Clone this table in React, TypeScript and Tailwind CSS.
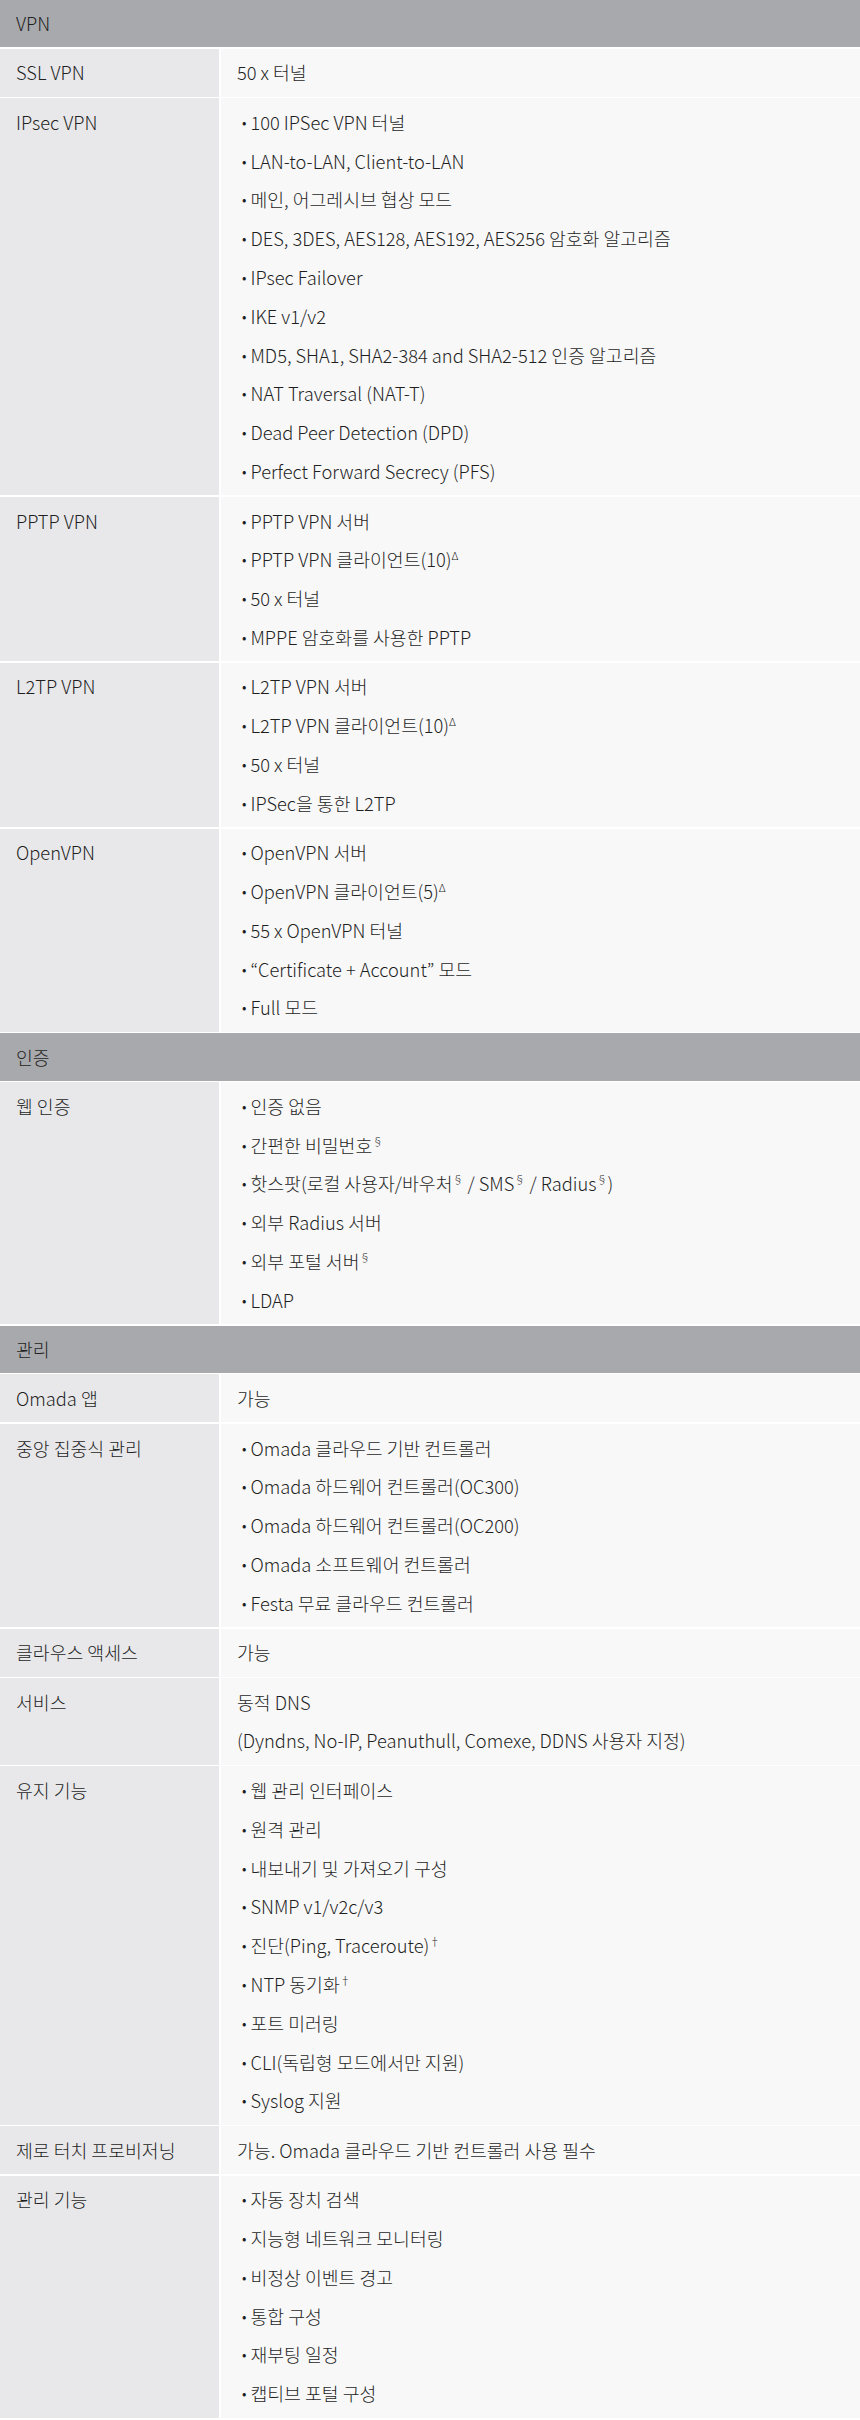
import React from "react";

type Row = {
  label: string;
  value?: React.ReactNode[];
  list?: React.ReactNode[];
};

type Section = {
  title: string;
  rows: Row[];
};

const Sup = ({ children }: { children: React.ReactNode }) => (
  <sup className="relative -top-[7px] text-[11px] leading-none">{children}</sup>
);

const sections: Section[] = [
  {
    title: "VPN",
    rows: [
      { label: "SSL VPN", value: ["50 x 터널"] },
      {
        label: "IPsec VPN",
        list: [
          "100 IPSec VPN 터널",
          "LAN-to-LAN, Client-to-LAN",
          "메인, 어그레시브 협상 모드",
          "DES, 3DES, AES128, AES192, AES256 암호화 알고리즘",
          "IPsec Failover",
          "IKE v1/v2",
          "MD5, SHA1, SHA2-384 and SHA2-512 인증 알고리즘",
          "NAT Traversal (NAT-T)",
          "Dead Peer Detection (DPD)",
          "Perfect Forward Secrecy (PFS)",
        ],
      },
      {
        label: "PPTP VPN",
        list: [
          "PPTP VPN 서버",
          <>PPTP VPN 클라이언트(10)<Sup>Δ</Sup></>,
          "50 x 터널",
          "MPPE 암호화를 사용한 PPTP",
        ],
      },
      {
        label: "L2TP VPN",
        list: [
          "L2TP VPN 서버",
          <>L2TP VPN 클라이언트(10)<Sup>Δ</Sup></>,
          "50 x 터널",
          "IPSec을 통한 L2TP",
        ],
      },
      {
        label: "OpenVPN",
        list: [
          "OpenVPN 서버",
          <>OpenVPN 클라이언트(5)<Sup>Δ</Sup></>,
          "55 x OpenVPN 터널",
          "“Certificate + Account” 모드",
          "Full 모드",
        ],
      },
    ],
  },
  {
    title: "인증",
    rows: [
      {
        label: "웹 인증",
        list: [
          "인증 없음",
          <>간편한 비밀번호<Sup>§</Sup></>,
          <>핫스팟(로컬 사용자/바우처<Sup>§</Sup> / SMS<Sup>§</Sup> / Radius<Sup>§</Sup>)</>,
          "외부 Radius 서버",
          <>외부 포털 서버<Sup>§</Sup></>,
          "LDAP",
        ],
      },
    ],
  },
  {
    title: "관리",
    rows: [
      { label: "Omada 앱", value: ["가능"] },
      {
        label: "중앙 집중식 관리",
        list: [
          "Omada 클라우드 기반 컨트롤러",
          "Omada 하드웨어 컨트롤러(OC300)",
          "Omada 하드웨어 컨트롤러(OC200)",
          "Omada 소프트웨어 컨트롤러",
          "Festa 무료 클라우드 컨트롤러",
        ],
      },
      { label: "클라우스 액세스", value: ["가능"] },
      {
        label: "서비스",
        value: ["동적 DNS", "(Dyndns, No-IP, Peanuthull, Comexe, DDNS 사용자 지정)"],
      },
      {
        label: "유지 기능",
        list: [
          "웹 관리 인터페이스",
          "원격 관리",
          "내보내기 및 가져오기 구성",
          "SNMP v1/v2c/v3",
          <>진단(Ping, Traceroute)<Sup>†</Sup></>,
          <>NTP 동기화<Sup>†</Sup></>,
          "포트 미러링",
          "CLI(독립형 모드에서만 지원)",
          "Syslog 지원",
        ],
      },
      { label: "제로 터치 프로비저닝", value: ["가능. Omada 클라우드 기반 컨트롤러 사용 필수"] },
      {
        label: "관리 기능",
        list: [
          "자동 장치 검색",
          "지능형 네트워크 모니터링",
          "비정상 이벤트 경고",
          "통합 구성",
          "재부팅 일정",
          "캡티브 포털 구성",
        ],
      },
    ],
  },
];

function SpecRow({ row }: { row: Row }) {
  return (
    <div className="flex gap-[1.5px]">
      <div className="w-[219px] shrink-0 bg-[#e8e8ea] px-4 py-[4.6px]">{row.label}</div>
      <div className="flex-1 bg-[#f8f8f8] py-[4.6px] pl-[16.5px] pr-4">
        {row.value && row.value.map((v, i) => <div key={i}>{v}</div>)}
        {row.list && (
          <ul>
            {row.list.map((item, i) => (
              <li key={i} className="flex pl-[5px]">
                <span className="mr-[4px] text-[14px]">•</span>
                <span>{item}</span>
              </li>
            ))}
          </ul>
        )}
      </div>
    </div>
  );
}

export default function App() {
  return (
    <div
      className="flex w-[860px] flex-col gap-[1.5px] bg-white text-[18.3px] font-light leading-[38.8px] text-[#1f1f1f]"
      style={{ fontFamily: '"Noto Sans CJK KR", "Noto Sans", sans-serif' }}
    >
      {sections.map((s) => (
        <React.Fragment key={s.title}>
          <div className="flex h-[47.3px] items-center bg-[#a8a9ac] px-4">{s.title}</div>
          {s.rows.map((r) => (
            <SpecRow key={r.label} row={r} />
          ))}
        </React.Fragment>
      ))}
    </div>
  );
}
